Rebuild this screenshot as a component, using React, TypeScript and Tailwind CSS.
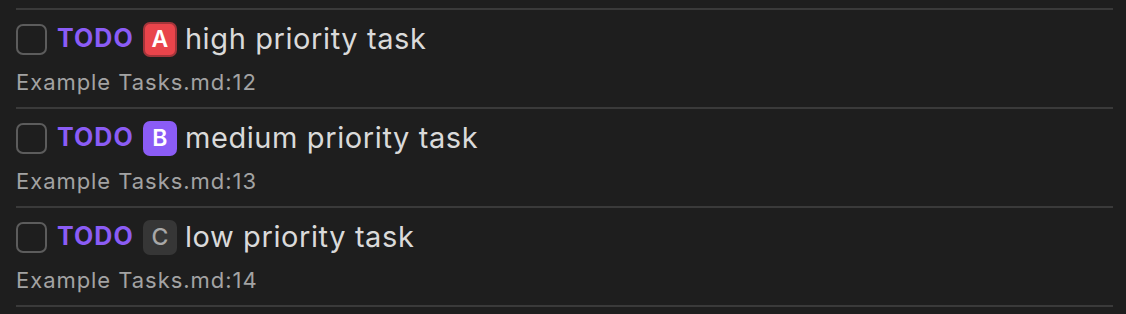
type Task = {
  priority: "A" | "B" | "C";
  text: string;
  line: number;
};

const tasks: Task[] = [
  { priority: "A", text: "high priority task", line: 12 },
  { priority: "B", text: "medium priority task", line: 13 },
  { priority: "C", text: "low priority task", line: 14 },
];

function PriorityBadge({ priority }: { priority: Task["priority"] }) {
  if (priority === "A") {
    return (
      <span className="flex h-[35px] w-[34px] items-center justify-center rounded-[7px] border-2 border-[#a3343a] bg-[#e9444b] text-[23px] font-semibold text-white">
        A
      </span>
    );
  }
  if (priority === "B") {
    return (
      <span className="flex h-[35px] w-[34px] items-center justify-center rounded-[7px] bg-[#8b5cf6] text-[23px] font-semibold text-white">
        B
      </span>
    );
  }
  return (
    <span className="flex h-[35px] w-[34px] items-center justify-center rounded-[7px] bg-[#363636] text-[23px] font-medium text-[#a8a8a8]">
      C
    </span>
  );
}

function TaskRow({ task }: { task: Task }) {
  return (
    <div className="h-[99px] border-t-2 border-[#3a3a3a]">
      <div className="flex h-[36px] items-center mt-[11px]">
        <div className="h-[31px] w-[31px] rounded-[7px] border-2 border-[#5c5c5c]" />
        <span className="ml-[10px] text-[25px] font-bold tracking-[1.1px] text-[#8b5cf6]">TODO</span>
        <div className="ml-[9px]">
          <PriorityBadge priority={task.priority} />
        </div>
        <span className="ml-[8px] text-[29px] tracking-[0.6px] text-[#dadada]">{task.text}</span>
      </div>
      <div className="mt-[11px] text-[22px] leading-[28px] tracking-[0.95px] text-[#a3a3a3]">
        Example Tasks.md:{task.line}
      </div>
    </div>
  );
}

export default function App() {
  return (
    <div
      className="h-[314px] w-[1126px] bg-[#1e1e1e] pl-4 pr-[13px] pt-2"
      style={{ fontFamily: "Inter, 'Noto Sans', sans-serif" }}
    >
      {tasks.map((t) => (
        <TaskRow key={t.line} task={t} />
      ))}
      <div className="border-t-2 border-[#3a3a3a]" />
    </div>
  );
}
